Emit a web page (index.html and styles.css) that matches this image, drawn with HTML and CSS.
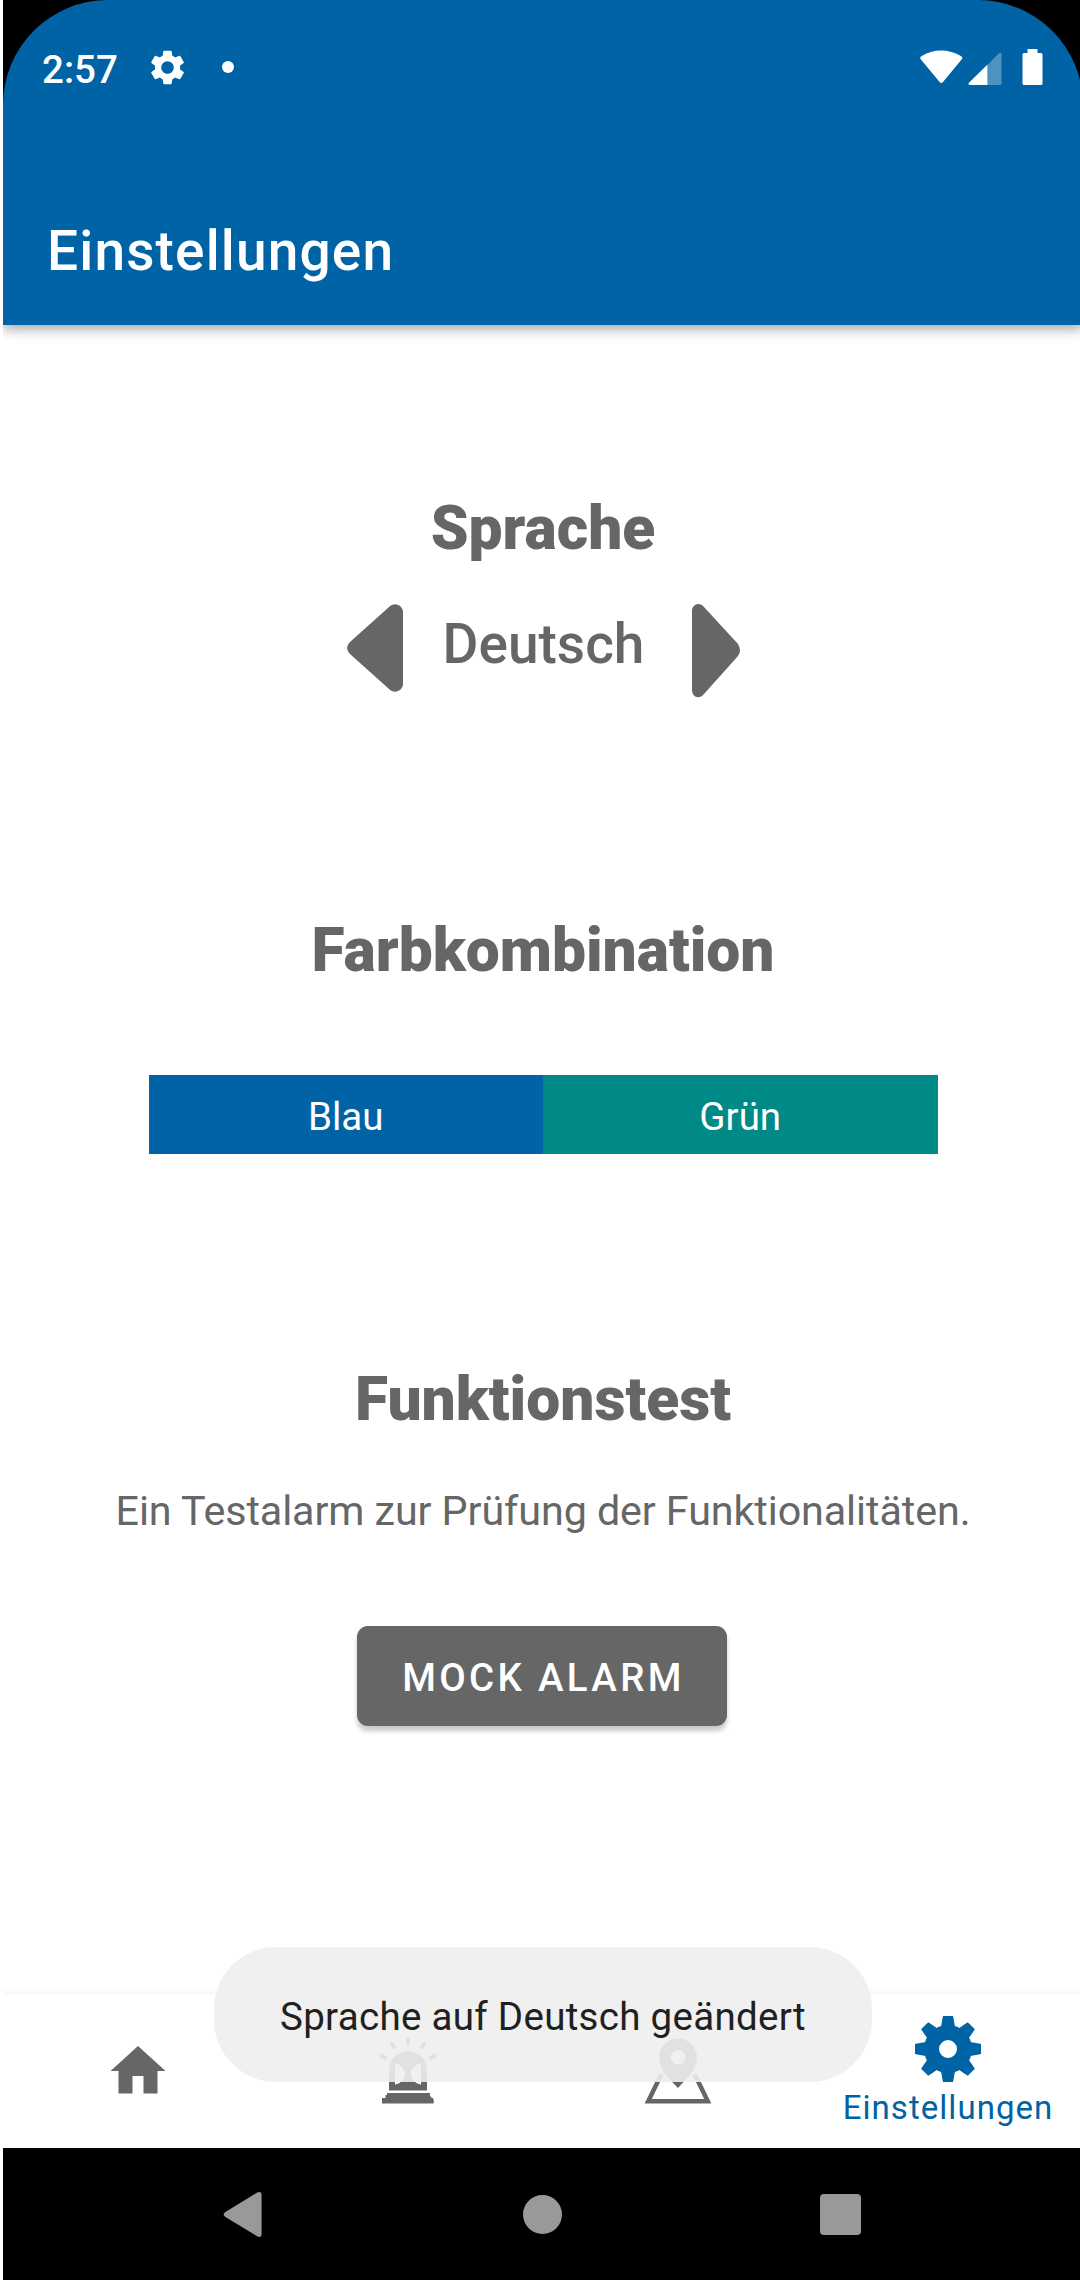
FILE: index.html
```html
<!DOCTYPE html>
<html lang="de">
<head>
<meta charset="utf-8">
<title>Einstellungen</title>
<link rel="stylesheet" href="styles.css">
</head>
<body>
<div class="screen">
  <div class="top">
    <header class="header">
      <div class="status">
        <span class="time">2:57</span>
        <svg class="status-gear" viewBox="2 2 20 20"><path d="M19.14 12.94c.04-.3.06-.61.06-.94s-.02-.64-.07-.94l2.03-1.58a.49.49 0 0 0 .12-.61l-1.92-3.32a.49.49 0 0 0-.59-.22l-2.39.96a7 7 0 0 0-1.62-.94l-.36-2.54a.48.48 0 0 0-.48-.41h-3.84a.47.47 0 0 0-.47.41l-.36 2.54c-.59.24-1.13.57-1.62.94l-2.39-.96a.48.48 0 0 0-.59.22L2.74 8.87a.47.47 0 0 0 .12.61l2.03 1.58a6.6 6.6 0 0 0 0 1.88l-2.03 1.58a.49.49 0 0 0-.12.61l1.92 3.32c.12.22.37.29.59.22l2.39-.96c.5.38 1.03.7 1.62.94l.36 2.54c.05.24.24.41.48.41h3.84c.24 0 .44-.17.47-.41l.36-2.54a7 7 0 0 0 1.62-.94l2.39.96c.22.08.47 0 .59-.22l1.92-3.32a.47.47 0 0 0-.12-.61zM12 15.6a3.6 3.6 0 1 1 0-7.2 3.6 3.6 0 0 1 0 7.2z"/></svg>
        <span class="dot"></span>
        <svg class="signals" viewBox="0 0 124 38"><path d="M.5 9Q-.5 7.500 1.300 6.300C13-1.600 29-1.600 41.300 6.300Q43 7.500 42 9L23 32Q21.300 34.200 19.600 32Z"/><path opacity=".3" d="M68 14.500 78 4Q81.500 1.500 81.500 4V33.500Q81.500 35 80 35H67.500Z"/><path d="M67.500 14.500V35H50Q47.500 34.500 49 32.700Z"/><path d="M107.500-1H117.500V3H121Q122.500 3 122.500 4.500V33.500Q122.500 35 121 35H104Q102.500 35 102.500 33.500V4.500Q102.500 3 104 3H107.500Z"/></svg>
      </div>
      <h1 class="title">Einstellungen</h1>
    </header>
  </div>
  <main class="main">
    <section class="language">
      <h2>Sprache</h2>
      <div class="picker">
        <svg class="prev" viewBox="0 0 56 90"><path d="M3 39 42 4C48-2 56 3 56 9V81C56 87 48 92 42 86L3 51Q-3 45 3 39Z"/></svg>
        <span class="lang">Deutsch</span>
        <svg class="next" viewBox="0 0 48 94"><path d="M12 3 46 40Q50 47 46 52L12 90C7 96 0 93 0 86V7C0 1 7-3 12 3Z"/></svg>
      </div>
    </section>
    <section class="colors">
      <h2>Farbkombination</h2>
      <div class="swatches"><div class="blue">Blau</div><div class="green">Grün</div></div>
    </section>
    <section class="test">
      <h2>Funktionstest</h2>
      <p>Ein Testalarm zur Prüfung der Funktionalitäten.</p>
      <button class="mock">MOCK ALARM</button>
    </section>
  </main>
  <nav class="tabs">
    <div class="tab"><svg class="home" viewBox="0 0 56 48"><path d="M28 0 55.500 25H47.500V47.500H33.500V30H22.500V47.500H8.500V25H.5Z"/></svg></div>
    <div class="tab"><svg class="alarm" viewBox="0 0 60 70"><path fill-rule="evenodd" d="M11 53.500V33.500a19 19 0 0 1 38 0V53.500ZM17 26.500V47.500C30.500 45 30.500 29 17 26.500ZM43 26.500C29.500 29 29.500 45 43 47.500Z"/><path d="M9 56H52V59Q53.500 59.500 53.500 61H55Q56.500 64 55.500 66.500H4V61H7.500V58H9Z"/><path class="rays" d="M30 3V6M14 7 16 10M46 7 44 10M3.500 18.700 7 20.700M56.500 18.700 53 20.700"/></svg></div>
    <div class="tab"><svg class="map" viewBox="0 0 68 70"><path fill-rule="evenodd" d="M34 51C28 44 15 34 15 20.500a19 19 0 0 1 38 0C53 34 40 44 34 51ZM34 13a7.300 7.300 0 1 0 0 14.600 7.300 7.300 0 0 0 0-14.600Z"/><path class="sheet" d="M19 39.500 16.500 39 4.200 64.200H63.800L51.500 39 49 39.500"/></svg></div>
    <div class="tab active"><svg class="gear" viewBox="-34 -34 68 68"><defs><path id="tooth" d="M-5-33H5L6-28 7-22H-7L-6-28Z"/></defs><path fill-rule="evenodd" d="M0-24A24 24 0 1 0 0 24 24 24 0 1 0 0-24ZM0-9A9 9 0 1 1 0 9 9 9 0 1 1 0-9Z"/><use href="#tooth"/><use href="#tooth" transform="rotate(45)"/><use href="#tooth" transform="rotate(90)"/><use href="#tooth" transform="rotate(135)"/><use href="#tooth" transform="rotate(180)"/><use href="#tooth" transform="rotate(225)"/><use href="#tooth" transform="rotate(270)"/><use href="#tooth" transform="rotate(315)"/></svg><span>Einstellungen</span></div>
    <div class="toast">Sprache auf Deutsch geändert</div>
  </nav>
  <footer class="system">
    <svg class="back" viewBox="0 0 39 46"><path d="M2 20.500 34 .8Q39-1.500 39 3V43Q39 47.500 34 45L2 25.500Q-1.500 23 2 20.500Z"/></svg>
    <span class="circle"></span>
    <span class="square"></span>
  </footer>
</div>
</body>
</html>
```
FILE: styles.css
```css
* { box-sizing: border-box; }
html { overflow: hidden; }
body { margin: 0; background: #fff; font-family: Roboto, sans-serif; color: #666; }
.screen { width: 1080px; height: 2280px; margin-left: 3px; display: flex; flex-direction: column; overflow: hidden; }
.top { height: 325px; flex: none; background: linear-gradient(#000 0 110px, #0063a6 110px); box-shadow: 0 4px 12px rgba(0,0,0,.36); }
.header { height: 325px; background: #0063a6; border-radius: 105px 105px 0 0; color: #fff; }
.status { height: 136px; display: flex; align-items: center; padding: 0 39.500px 0 39px; }
.time { font-size: 38.500px; font-weight: 500; width: 76px; padding-top: 2px; white-space: nowrap; }
.status svg { fill: #fff; }
.status-gear { width: 35px; height: 35px; margin: -1px 0 0 32px; }
.dot { width: 12px; height: 12px; border-radius: 50%; background: #fff; margin: -2px 0 0 37px; }
.signals { width: 124px; height: 38px; margin: 1px 0 0 auto; overflow: visible; }
.title { margin: 83px 0 0 44px; font-size: 55px; line-height: 64px; font-weight: 500; letter-spacing: 1.150px; }
.main { flex: 1; display: flex; flex-direction: column; align-items: center; }
section { display: flex; flex-direction: column; align-items: center; }
h2 { margin: 0; font-size: 60.500px; line-height: 72px; font-weight: 900; letter-spacing: 0; white-space: nowrap; }
.language { height: 422px; padding-top: 168px; }
.picker { display: flex; align-items: flex-start; margin-top: 38px; }
.picker svg { fill: #666; }
.prev { width: 56px; height: 90px; }
.lang { width: 289px; text-align: center; font-size: 55px; line-height: 64px; font-weight: 500; padding: 9px 7px 0 0; }
.next { width: 48px; height: 94px; margin-top: .5px; }
.colors { height: 449px; padding-top: 168px; }
.swatches { display: flex; width: 789px; height: 79px; margin-top: 88px; color: #fff; font-size: 38.500px; line-height: 84px; text-align: center; }
.blue { flex: 1; background: #0063a6; }
.green { flex: 1; background: #008a87; }
.test { padding-top: 168px; }
.test p { margin: 51px 0 0; font-size: 41.250px; line-height: 48px; letter-spacing: -.090px; white-space: nowrap; }
.mock { margin: 91px 2px 0 0; width: 370px; height: 100px; border: 0; border-radius: 11px; background: #666; color: #fff; font: 500 38.500px/48px Roboto, sans-serif; letter-spacing: 3.300px; box-shadow: 0 5px 5px rgba(0,0,0,.22); white-space: nowrap; padding: 3px 0 0 3px; }
.tabs { position: relative; height: 154px; flex: none; display: grid; grid-template-columns: repeat(4, 270px); background: #fff; box-shadow: 0 -2px 6px rgba(0,0,0,.05); }
.tab { display: flex; flex-direction: column; align-items: center; color: #0063a6; font-size: 33px; line-height: 40px; letter-spacing: 1.050px; white-space: nowrap; }
.tab svg { fill: #666; }
.tab .gear { width: 68px; height: 68px; fill: #0063a6; margin-top: 21px; }
.tab span { margin-top: 5px; }
.tab .home { width: 56px; height: 48px; margin-top: 52px; }
.tab .alarm { width: 60px; height: 70px; margin-top: 43px; }
.tab .map { width: 68px; height: 70px; margin-top: 43px; }
.rays { fill: none; stroke: #666; stroke-width: 4; stroke-linecap: round; }
.sheet { fill: none; stroke: #666; stroke-width: 4.500; }
.toast { position: absolute; left: 211px; top: -47px; width: 658px; height: 135px; border-radius: 62px; background: rgba(238,238,238,.9); color: #202020; font-size: 38.500px; line-height: 140px; letter-spacing: .310px; text-align: center; white-space: nowrap; }
.system { height: 132px; flex: none; background: #000; display: flex; align-items: center; padding: 1px 222px 0 220px; justify-content: space-between; }
.back { width: 39px; height: 45px; fill: #999; }
.circle { width: 39px; height: 39px; border-radius: 50%; background: #999; margin-left: 3px; }
.square { width: 41px; height: 41px; border-radius: 4px; background: #999; }
```
